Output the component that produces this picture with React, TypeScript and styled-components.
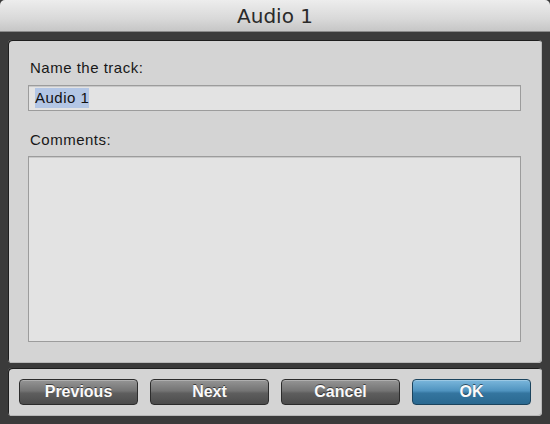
import React from "react";
import styled, { createGlobalStyle, css } from "styled-components";

const GlobalStyle = createGlobalStyle`
  html, body {
    margin: 0;
    padding: 0;
    background: #3b3b3b;
  }
  * {
    box-sizing: border-box;
  }
`;

const Window = styled.div`
  width: 550px;
  height: 424px;
  display: flex;
  flex-direction: column;
  background: #3b3b3b;
  font-family: "Liberation Sans", Arial, sans-serif;
`;

const TitleBar = styled.div`
  height: 32px;
  flex: none;
  display: flex;
  align-items: center;
  justify-content: center;
  background: linear-gradient(#ededed, #d9d9d9 60%, #c6c6c6);
  border-radius: 5px 5px 0 0;
  border-bottom: 1px solid #8a8a8a;
  font-family: "DejaVu Sans", Verdana, sans-serif;
  font-size: 20px;
  color: #2a2a2a;
  padding-top: 1px;
`;

const Body = styled.div`
  flex: 1;
  display: flex;
  flex-direction: column;
  gap: 5px;
  padding: 8px;
`;

const Panel = styled.div`
  background: #d4d4d4;
  border-radius: 4px;
  box-shadow: inset 1px 1px 0 #1e1e1e, inset -1px -1px 0 #b8b8b8;
`;

const FormPanel = styled(Panel)`
  flex: 1;
  display: flex;
  flex-direction: column;
  padding: 19px 21px 21px 20px;
`;

const Label = styled.div<{ $gap: number }>`
  font-size: 15px;
  line-height: 17px;
  letter-spacing: 0.5px;
  color: #181818;
  margin: 0 0 ${({ $gap }) => $gap}px 2px;
`;

const fieldLook = css`
  background: #e3e3e3;
  border: 1px solid #9c9c9c;
  box-shadow: inset 0 1px 0 #c8c8c8;
`;

const TextField = styled.div`
  ${fieldLook}
  height: 26px;
  display: flex;
  align-items: center;
  padding: 0 6px;
  margin-bottom: 20px;
  font-size: 15px;
  letter-spacing: 0.5px;
  color: #111;
`;

const Selected = styled.span`
  background: #b3c6e5;
  padding: 1px 0 2px;
`;

const TextArea = styled.div`
  ${fieldLook}
  flex: 1;
`;

const ButtonPanel = styled(Panel)`
  height: 48px;
  flex: none;
  display: grid;
  grid-template-columns: repeat(4, 1fr);
  gap: 12px;
  align-items: center;
  padding: 0 11px;
`;

const Button = styled.button<{ $primary?: boolean }>`
  height: 26px;
  border-radius: 4px;
  font-family: "Liberation Sans", Arial, sans-serif;
  font-weight: bold;
  font-size: 16px;
  color: #fafafa;
  text-shadow: 0 -1px 0 rgba(0, 0, 0, 0.55);
  padding: 0;
  cursor: pointer;
  border: 1px solid ${({ $primary }) => ($primary ? "#1b445e" : "#2c2c2c")};
  background: ${({ $primary }) =>
    $primary
      ? "linear-gradient(#7bb7dc, #4f93bf 45%, #34759f 55%, #2a6991)"
      : "linear-gradient(#959595, #747474 45%, #5e5e5e 55%, #4c4c4c)"};
  box-shadow: inset 0 1px 0 rgba(255, 255, 255, 0.25);
`;

export default function App() {
  return (
    <>
      <GlobalStyle />
      <Window>
        <TitleBar>Audio 1</TitleBar>
        <Body>
          <FormPanel>
            <Label $gap={9}>Name the track:</Label>
            <TextField>
              <Selected>Audio 1</Selected>
            </TextField>
            <Label $gap={8}>Comments:</Label>
            <TextArea />
          </FormPanel>
          <ButtonPanel>
            <Button>Previous</Button>
            <Button>Next</Button>
            <Button>Cancel</Button>
            <Button $primary>OK</Button>
          </ButtonPanel>
        </Body>
      </Window>
    </>
  );
}
